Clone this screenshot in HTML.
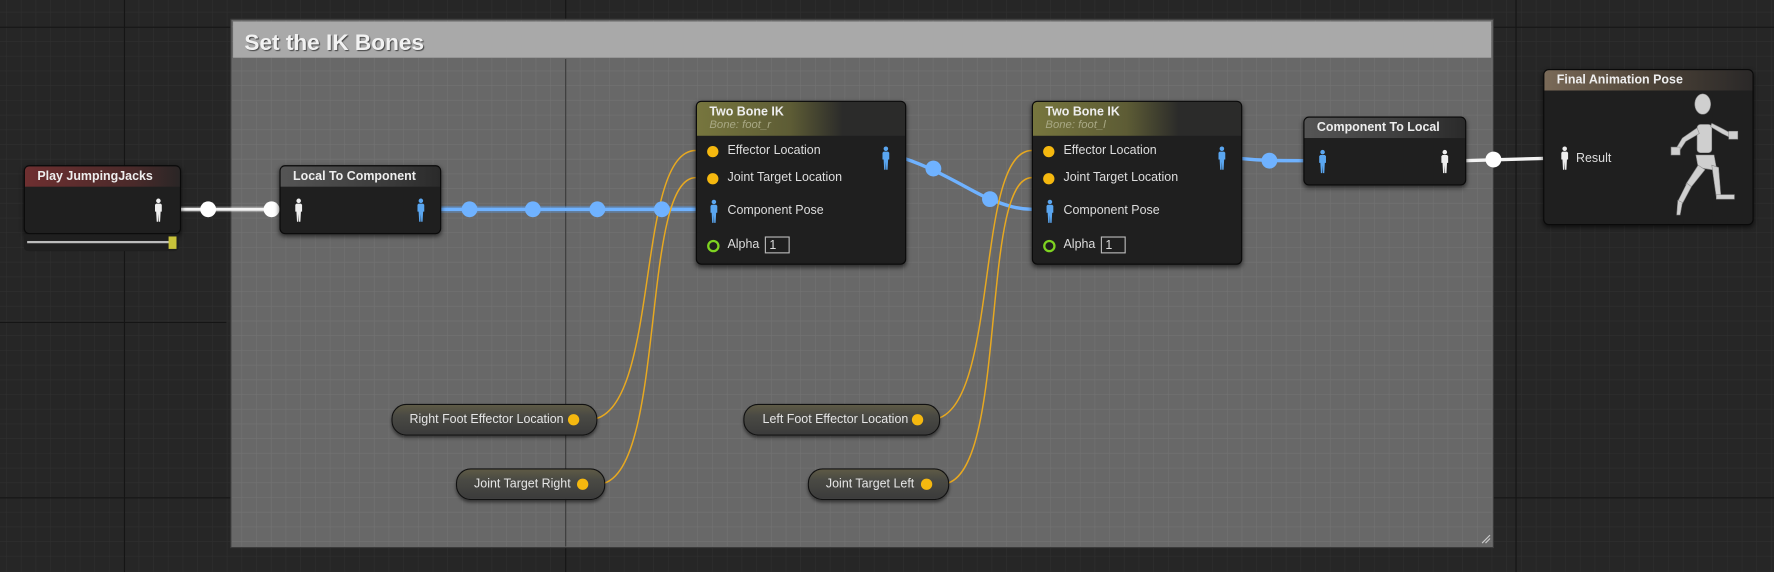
<!DOCTYPE html>
<html><head><meta charset="utf-8"><style>
html,body{margin:0;padding:0;width:1774px;height:572px;overflow:hidden;background:#262626;}
#root{position:absolute;left:0;top:0;width:1568px;height:506px;transform:scale(1.13138);transform-origin:0 0;font-family:"Liberation Sans",sans-serif;}
.node{position:absolute;background:#1f1f1f;border:1px solid #0a0a0a;border-radius:5px;box-shadow:0 2px 4px rgba(0,0,0,.6);color:#ddd;font-size:11px;overflow:hidden;}
.hdr{height:18px;line-height:18px;padding-left:11px;font-weight:bold;color:#eee;font-size:11px;}
.pill{position:absolute;height:26px;border:1px solid #111;border-radius:13px;background:linear-gradient(#5e5a45 0%,#4a4a44 35%,#3b3b3b 100%);box-shadow:0 2px 3px rgba(0,0,0,.5);color:#e6e6e6;font-size:11px;line-height:26px;}
.pin{position:absolute;width:10px;height:10px;border-radius:50%;background:#f5b80f;}
.lbl{position:absolute;font-size:11px;color:#ddd;}
</style></head><body><div id="root">
<svg width="1568" height="506" style="position:absolute;left:0;top:0">
<defs>
<pattern id="g1" width="13" height="13" patternUnits="userSpaceOnUse" x="6" y="11"><path d="M13 0V13M0 13H13" stroke="#2f2f2f" stroke-width="1" fill="none"/></pattern>
<pattern id="g2" width="13" height="13" patternUnits="userSpaceOnUse" x="6" y="11"><path d="M13 0V13M0 13H13" stroke="#737373" stroke-width="1" fill="none"/></pattern>
<linearGradient id="cg" x1="0" y1="0" x2="0" y2="1"><stop offset="0" stop-color="#6a6a6a"/><stop offset="1" stop-color="#666"/></linearGradient>
</defs>
<rect width="1568" height="506" fill="#262626"/>
<rect width="1568" height="506" fill="url(#g1)"/>
<path d="M500 0V506M0 24H1568M0 440H1568M1340 0V506M110 0V506M0 285H200" stroke="#151515" stroke-width="1"/>
<rect x="204" y="17" width="1116" height="467" fill="#686868" stroke="#3a3a3a"/>
<rect x="205" y="18" width="1114" height="465" fill="url(#g2)"/>
<path d="M500 52V483" stroke="#3a3a3a"/>
<rect x="206" y="19" width="1112" height="32" fill="#a9a9a9"/>
<text x="216" y="44" font-family="Liberation Sans" font-weight="bold" font-size="20" fill="#f2f2f2" style="text-shadow:1px 1px 1px #444">Set the IK Bones</text>
<path d="M1310 480L1317 473M1313 480L1317 476" stroke="#ccc" stroke-width="1"/>
<!-- wires -->
<g fill="none">
<path d="M158 185H247" stroke="#fff" stroke-width="5" opacity=".3"/>
<path d="M158 185H247" stroke="#f4f4f4" stroke-width="2.5"/>
<path d="M388 185H615" stroke="#5aa6ff" stroke-width="6" opacity=".35"/>
<path d="M388 185H615" stroke="#6fb2ff" stroke-width="3"/>
<path d="M799 140C830 150 860 170 875 176S900 185 912 185" stroke="#6fb2ff" stroke-width="3"/>
<path d="M1096 140C1115 142 1130 142 1152 142" stroke="#6fb2ff" stroke-width="3"/>
<path d="M1294 142L1364 140" stroke="#f4f4f4" stroke-width="3"/>
<path d="M520 371C585 371 560 133 615 133" stroke="#e8a920" stroke-width="1.3"/>
<path d="M528 428C590 428 565 157 615 157" stroke="#e8a920" stroke-width="1.3"/>
<path d="M822 371C885 371 860 133 912 133" stroke="#e8a920" stroke-width="1.3"/>
<path d="M832 428C892 428 865 157 912 157" stroke="#e8a920" stroke-width="1.3"/>
</g>
<g fill="#fff"><circle cx="184" cy="185" r="7"/><circle cx="240" cy="185" r="7"/><circle cx="1320" cy="141" r="7"/></g>
<g fill="#6fb2ff"><circle cx="415" cy="185" r="7"/><circle cx="471" cy="185" r="7"/><circle cx="528" cy="185" r="7"/><circle cx="585" cy="185" r="7"/><circle cx="825" cy="149" r="7"/><circle cx="875" cy="176" r="7"/><circle cx="1122" cy="142" r="7"/></g>
</svg>

<svg width="0" height="0" style="position:absolute"><defs>
<symbol id="man" viewBox="0 0 8 22"><circle cx="4" cy="2.5" r="2"/><path d="M2 5H6L7 6V12H6L5.5 21H4.3L4 14L3.7 21H2.5L2 12H1V6Z"/></symbol>
</defs></svg>

<!-- Play JumpingJacks -->
<div class="node" style="left:21px;top:146px;width:137px;height:59px;">
<div class="hdr" style="background:linear-gradient(90deg,#6e2f30,#4a2a2a 70%,#2a2626);">Play JumpingJacks</div>
<svg style="position:absolute;left:114px;top:28px" width="8" height="22" fill="#eee"><use href="#man"/></svg>
</div>
<div style="position:absolute;left:21px;top:207px;width:137px;height:15px;background:#1f1f1f;border-radius:0 0 4px 4px"></div>
<div style="position:absolute;left:24px;top:213px;width:126px;height:2px;background:#bbb"></div>
<div style="position:absolute;left:149px;top:209px;width:7px;height:11px;background:#c8c23a"></div>

<!-- Local To Component -->
<div class="node" style="left:247px;top:146px;width:141px;height:59px;">
<div class="hdr" style="background:linear-gradient(90deg,#555,#3a3a3a 70%,#2a2a2a);">Local To Component</div>
<svg style="position:absolute;left:12px;top:28px" width="8" height="22" fill="#eee"><use href="#man"/></svg>
<svg style="position:absolute;left:120px;top:28px" width="8" height="22" fill="#5aa6f0"><use href="#man"/></svg>
</div>

<!-- Two Bone IK 1 -->
<div class="node" style="left:615px;top:89px;width:184px;height:143px;">
<div style="height:30px;background:linear-gradient(90deg,#77763e,#5d5c35 45%,#2b2b2a 70%);padding-left:11px;">
<div style="font-weight:bold;color:#eee;font-size:11px;padding-top:3px">Two Bone IK</div>
<div style="font-style:italic;color:#a8a884;font-size:10px">Bone: foot_r</div></div>
<div class="pin" style="left:9px;top:39px"></div><div class="lbl" style="left:27px;top:37px">Effector Location</div>
<div class="pin" style="left:9px;top:63px"></div><div class="lbl" style="left:27px;top:61px">Joint Target Location</div>
<svg style="position:absolute;left:11px;top:86px" width="8" height="22" fill="#5aa6f0"><use href="#man"/></svg>
<div class="lbl" style="left:27px;top:90px">Component Pose</div>
<div style="position:absolute;left:9px;top:122px;width:7px;height:7px;border:2px solid #7ed321;border-radius:50%"></div>
<div class="lbl" style="left:27px;top:120px">Alpha</div>
<div style="position:absolute;left:60px;top:119px;width:22px;height:15px;border:1px solid #bbb;color:#ddd;font-size:11px;line-height:15px;padding-left:3px;box-sizing:border-box">1</div>
<svg style="position:absolute;left:163px;top:39px" width="8" height="22" fill="#5aa6f0"><use href="#man"/></svg>
</div>

<!-- Two Bone IK 2 -->
<div class="node" style="left:912px;top:89px;width:184px;height:143px;">
<div style="height:30px;background:linear-gradient(90deg,#77763e,#5d5c35 45%,#2b2b2a 70%);padding-left:11px;">
<div style="font-weight:bold;color:#eee;font-size:11px;padding-top:3px">Two Bone IK</div>
<div style="font-style:italic;color:#a8a884;font-size:10px">Bone: foot_l</div></div>
<div class="pin" style="left:9px;top:39px"></div><div class="lbl" style="left:27px;top:37px">Effector Location</div>
<div class="pin" style="left:9px;top:63px"></div><div class="lbl" style="left:27px;top:61px">Joint Target Location</div>
<svg style="position:absolute;left:11px;top:86px" width="8" height="22" fill="#5aa6f0"><use href="#man"/></svg>
<div class="lbl" style="left:27px;top:90px">Component Pose</div>
<div style="position:absolute;left:9px;top:122px;width:7px;height:7px;border:2px solid #7ed321;border-radius:50%"></div>
<div class="lbl" style="left:27px;top:120px">Alpha</div>
<div style="position:absolute;left:60px;top:119px;width:22px;height:15px;border:1px solid #bbb;color:#ddd;font-size:11px;line-height:15px;padding-left:3px;box-sizing:border-box">1</div>
<svg style="position:absolute;left:163px;top:39px" width="8" height="22" fill="#5aa6f0"><use href="#man"/></svg>
</div>

<!-- Component To Local -->
<div class="node" style="left:1152px;top:103px;width:142px;height:59px;">
<div class="hdr" style="background:linear-gradient(90deg,#555,#3a3a3a 70%,#2a2a2a);">Component To Local</div>
<svg style="position:absolute;left:12px;top:28px" width="8" height="22" fill="#5aa6f0"><use href="#man"/></svg>
<svg style="position:absolute;left:120px;top:28px" width="8" height="22" fill="#eee"><use href="#man"/></svg>
</div>

<!-- Final Animation Pose -->
<div class="node" style="left:1364px;top:61px;width:184px;height:136px;">
<div class="hdr" style="background:linear-gradient(90deg,#7a6a58,#4e4438 50%,#2a2828);">Final Animation Pose</div>
<svg style="position:absolute;left:14px;top:67px" width="8" height="22" fill="#eee"><use href="#man"/></svg>
<div class="lbl" style="left:28px;top:72px">Result</div>
<svg style="position:absolute;left:90px;top:18px" width="94" height="118" viewBox="0 0 94 118">
<g fill="#cfcfcf" stroke="#888" stroke-width=".5">
<ellipse cx="50" cy="12" rx="7" ry="9"/>
<rect x="45" y="30" width="13" height="25" rx="3"/>
<path d="M45 33L32 42L26 52L29 54L35 45L47 38Z"/>
<path d="M57 32L67 38L75 42L77 39L68 34L58 29Z"/>
<rect x="73" y="36" width="8" height="7"/>
<rect x="22" y="50" width="8" height="7"/>
<path d="M44 57L60 57L62 68L58 70L46 68Z"/>
<path d="M58 66L64 68L66 93L62 94Z"/>
<path d="M62 92L78 92L78 96L62 96Z"/>
<path d="M46 66L52 70L40 85L35 83Z"/>
<path d="M36 82L40 85L32 100L28 98Z"/>
<path d="M28 97L32 99L30 110L27 110Z"/>
</g></svg>
</div>

<!-- pills -->
<div class="pill" style="left:346px;top:357px;width:180px;"><span style="position:absolute;left:15px">Right Foot Effector Location</span><div class="pin" style="left:155px;top:8px"></div></div>
<div class="pill" style="left:403px;top:414px;width:130px;"><span style="position:absolute;left:15px">Joint Target Right</span><div class="pin" style="left:106px;top:8px"></div></div>
<div class="pill" style="left:657px;top:357px;width:172px;"><span style="position:absolute;left:16px">Left Foot Effector Location</span><div class="pin" style="left:148px;top:8px"></div></div>
<div class="pill" style="left:714px;top:414px;width:123px;"><span style="position:absolute;left:15px">Joint Target Left</span><div class="pin" style="left:99px;top:8px"></div></div>
</div></body></html>
